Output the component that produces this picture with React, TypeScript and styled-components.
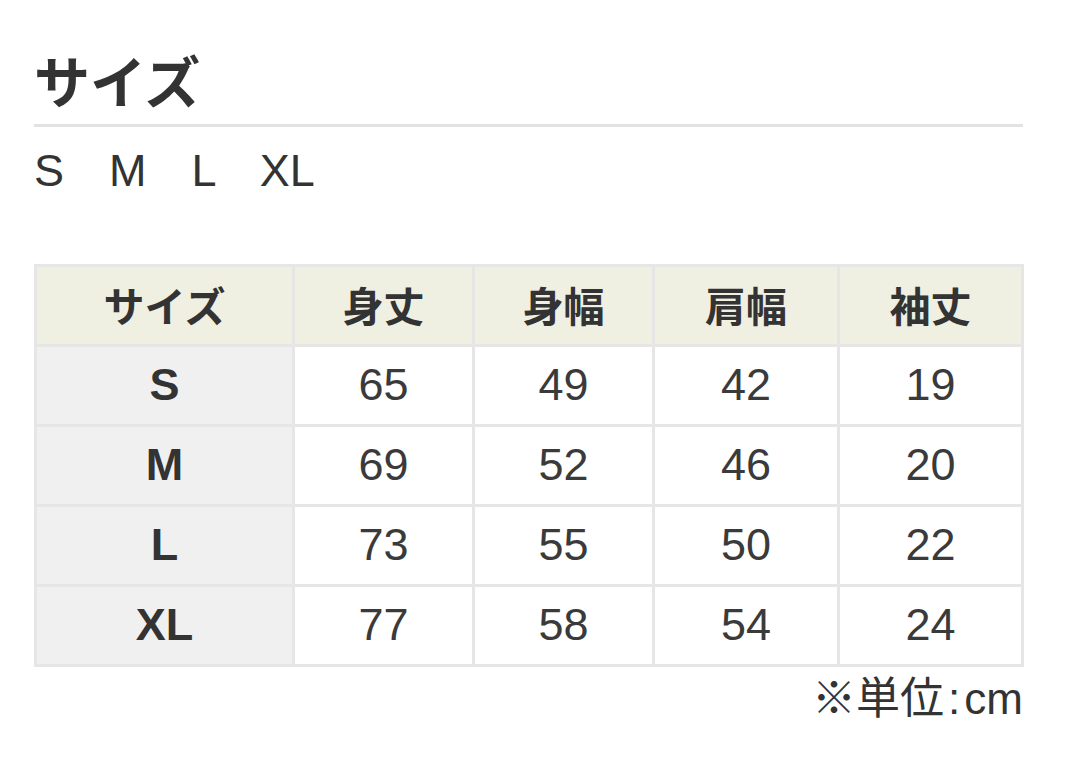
import React from "react";
import styled, { createGlobalStyle } from "styled-components";

const Global = createGlobalStyle`
  html, body { margin: 0; padding: 0; background: #fff; }
  body {
    font-family: "Liberation Sans", "Noto Sans CJK JP", sans-serif;
    color: #333;
  }
`;

const Page = styled.div`
  width: 989px;
  padding: 44px 0 0 34px;
`;

const Title = styled.h2`
  margin: 0;
  font-family: "Noto Sans CJK JP", sans-serif;
  font-weight: 700;
  font-size: 56px;
  line-height: 70px;
  color: #333;
  padding-bottom: 10px;
  border-bottom: 3px solid #e2e2e2;
`;

const Sizes = styled.p`
  margin: 19px 0 0;
  font-size: 45px;
  line-height: 50px;
  white-space: pre;
  color: #333;
`;

const Table = styled.table`
  margin-top: 68px;
  width: 989px;
  border-collapse: collapse;
  table-layout: fixed;
`;

const HeadCell = styled.th`
  height: 73px;
  padding: 0 0 4px;
  background: #efefe2;
  border: 3px solid #e6e6e6;
  font-family: "Noto Sans CJK JP", sans-serif;
  font-weight: 700;
  font-size: 41px;
  color: #333;
  text-align: center;
`;

const RowHead = styled.th`
  height: 75px;
  padding: 0 0 2px;
  background: #f0f0f0;
  border: 3px solid #e6e6e6;
  font-family: "Liberation Sans", sans-serif;
  font-weight: 700;
  font-size: 45px;
  color: #333;
  text-align: center;
`;

const Cell = styled.td`
  height: 75px;
  padding: 0 0 2px;
  background: #fff;
  border: 3px solid #e6e6e6;
  font-size: 45px;
  color: #3a3a3a;
  text-align: center;
`;

const Note = styled.p`
  margin: 6px 0 0;
  text-align: right;
  font-family: "Liberation Sans", "Noto Sans CJK JP", sans-serif;
  font-size: 44px;
  line-height: 52px;
  color: #333;
`;

const Colon = styled.span`
  margin: 0 4px;
`;

const headers = ["サイズ", "身丈", "身幅", "肩幅", "袖丈"];
const widths = [258, 180, 180, 185, 184];
const rows: [string, number[]][] = [
  ["S", [65, 49, 42, 19]],
  ["M", [69, 52, 46, 20]],
  ["L", [73, 55, 50, 22]],
  ["XL", [77, 58, 54, 24]],
];

export default function App() {
  return (
    <>
      <Global />
      <Page>
        <Title>サイズ</Title>
        <Sizes>{"S\u3000M\u3000L\u3000XL"}</Sizes>
        <Table>
          <colgroup>
            {widths.map((w, i) => (
              <col key={i} style={{ width: w }} />
            ))}
          </colgroup>
          <thead>
            <tr>
              {headers.map((h) => (
                <HeadCell key={h}>{h}</HeadCell>
              ))}
            </tr>
          </thead>
          <tbody>
            {rows.map(([size, vals]) => (
              <tr key={size}>
                <RowHead>{size}</RowHead>
                {vals.map((v, i) => (
                  <Cell key={i}>{v}</Cell>
                ))}
              </tr>
            ))}
          </tbody>
        </Table>
        <Note>
          ※単位<Colon>:</Colon>cm
        </Note>
      </Page>
    </>
  );
}
